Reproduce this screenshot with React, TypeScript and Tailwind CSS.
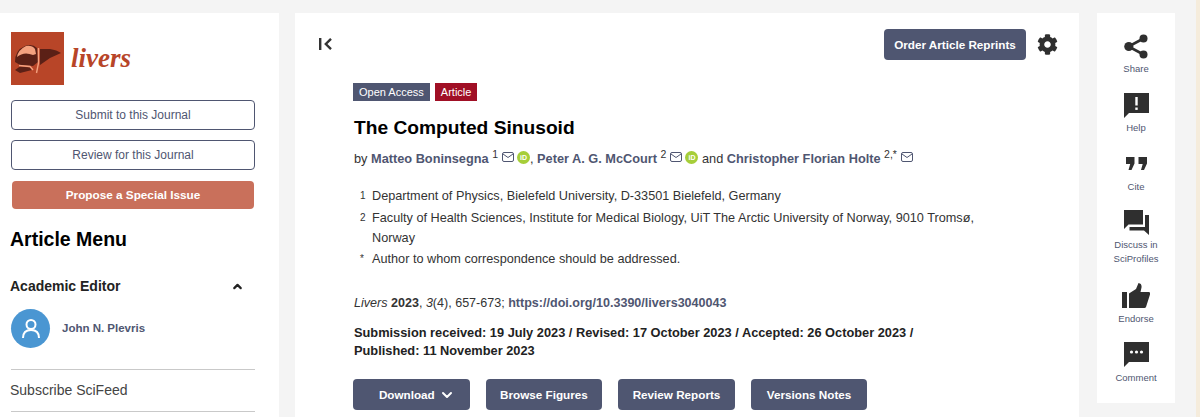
import { ChevronUp, ChevronDown } from "lucide-react"
import { FaCog } from "react-icons/fa"

function Mail() {
  return (
    <svg width="12" height="10" viewBox="0 0 12 10" fill="none" stroke="#4f5671" strokeWidth="1" className="inline-block ml-[4px] mr-[2px] align-[1px]">
      <rect x="0.5" y="0.5" width="11" height="9" rx="1.5" />
      <path d="M1 2l5 3.5L11 2" />
    </svg>
  )
}

function Orcid() {
  return (
    <span className="inline-flex w-[13px] h-[13px] rounded-full bg-[#a6ce39] text-white text-[7px] leading-[13px] justify-center font-bold align-[3px] ml-[1px]">
      iD
    </span>
  )
}

const ShareIcon = (
  <svg width="24" height="25" viewBox="0 0 24 25" fill="#2f2f2f" className="mt-[5px]">
    <path d="M19.5 4.5L4.5 12.5l15 8" fill="none" stroke="#2f2f2f" strokeWidth="2.6" />
    <circle cx="19.5" cy="4.5" r="4" />
    <circle cx="4.8" cy="12.5" r="4.6" />
    <circle cx="19.5" cy="20.5" r="4" />
  </svg>
)

const HelpIcon = (
  <svg width="25" height="25" viewBox="0 0 25 25" fill="#2f2f2f" className="mt-[4px]">
    <path d="M0 0H25V20H5L0 25Z" />
    <rect x="11.3" y="4" width="2.4" height="8.5" fill="#fff" />
    <rect x="11.3" y="14.5" width="2.4" height="2.4" fill="#fff" />
  </svg>
)

const CiteIcon = (
  <svg width="21" height="13" viewBox="0 0 21 13" fill="#2f2f2f" className="mt-[3px]">
    <path d="M0 0H8.5V6.5L5.5 13H2.5L4.2 7H0Z" />
    <path d="M12.5 0H21V6.5L18 13H15L16.7 7H12.5Z" />
  </svg>
)

const DiscussIcon = (
  <svg width="25" height="25" viewBox="0 0 25 25" fill="#2f2f2f" className="mt-[2px]">
    <path d="M0 0H19V14.5H4.5L0 19Z" />
    <path d="M21 5H25V25L20 20.5H5.5V17H21Z" />
  </svg>
)

const ThumbIcon = (
  <svg width="28" height="25" viewBox="0 0 28 25" fill="#2f2f2f" className="mt-[2px]">
    <rect x="0" y="9" width="5" height="16" />
    <path d="M7 10.5L14 6L16.5 0Q20 0.5 19.5 4.5L18.5 9H27Q28.5 9.5 28 11.5L24 24Q23.5 25 22.5 25H7Z" />
  </svg>
)

const CommentIcon = (
  <svg width="25" height="25" viewBox="0 0 25 25" fill="#2f2f2f" className="mt-[3px]">
    <path d="M0 0H25V20H5L0 25Z" />
    <circle cx="7.5" cy="10" r="1.6" fill="#fff" />
    <circle cx="12.5" cy="10" r="1.6" fill="#fff" />
    <circle cx="17.5" cy="10" r="1.6" fill="#fff" />
  </svg>
)

function SideAction({ icon, label, h }: { icon: React.ReactNode; label: React.ReactNode; h: string }) {
  return (
    <div className={`flex flex-col items-center ${h}`}>
      <div className="h-[32px] flex items-center justify-center">{icon}</div>
      <div className="text-[9.5px] leading-[15px] mt-[1px] text-[#4f5671] text-center">{label}</div>
    </div>
  )
}

function ActionButton({ children }: { children: React.ReactNode }) {
  return (
    <button className="w-[116.6px] h-[31px] rounded bg-[#4f5671] text-white text-[11.7px] font-bold flex items-center justify-center">
      {children}
    </button>
  )
}

export default function App() {
  return (
    <div className="h-[417px] w-[1200px] overflow-hidden bg-[#f4f4f4] flex pt-[13px] font-['Liberation_Sans',Arial,sans-serif] relative">
      <aside className="w-[279px] h-[420px] bg-white px-[11px] pt-[19px] shrink-0">
        <div className="flex items-center h-[53px]">
          <div className="w-[53px] h-[53px] bg-[#b84528]">
            <svg width="53" height="53" viewBox="0 0 53 53">
              <path d="M4 30Q4 18 14 14Q21 11 26 16L27 30L22 34L9 33Z" fill="#5b2016" />
              <path d="M6 25Q7 18 15 14Q21 13 24 17L25 22L22 23Q13 19 6 25Z" fill="#f4a17f" />
              <path d="M29 17L39 17Q46 18 50 21L39 26L29 33Z" fill="#5b2016" />
              <path d="M4 38L9 34.5L19 35.5L21 38L9 41Z" fill="#5b2016" />
              <path d="M27.5 16V31L25.5 41M8 33.5L19 34.5L22 38" fill="none" stroke="#f4a17f" strokeWidth="1.4" />
            </svg>
          </div>
          <span className="ml-[7px] font-['Liberation_Serif',serif] italic font-bold text-[27px] text-[#b84528] leading-none">livers</span>
        </div>
        <div className="mt-[15px] w-[244px] h-[30px] border border-[#4f5671] rounded text-[12px] text-[#4f5671] flex items-center justify-center">Submit to this Journal</div>
        <div className="mt-[10px] w-[244px] h-[30px] border border-[#4f5671] rounded text-[12px] text-[#4f5671] flex items-center justify-center">Review for this Journal</div>
        <div className="mt-[11px] ml-[1px] w-[242px] h-[28px] rounded bg-[#c9705b] text-[11.75px] font-bold text-white flex items-center justify-center">Propose a Special Issue</div>
        <h2 className="mt-[18px] -ml-[1px] text-[19.5px] leading-[24px] font-bold text-black">Article Menu</h2>
        <div className="mt-[26px] -ml-[1px] w-[245px] flex items-center justify-between pr-[11px]">
          <span className="text-[14px] leading-[18px] font-bold text-[#222]">Academic Editor</span>
          <ChevronUp size={13} strokeWidth={4} className="text-[#222] mt-[1px]" />
        </div>
        <div className="mt-[14px] flex items-center">
          <div className="w-[39px] h-[39px] rounded-full bg-[#4a96d2] flex items-center justify-center">
            <svg width="20" height="21" viewBox="0 0 20 21" fill="none" stroke="white" strokeWidth="2">
              <circle cx="10" cy="6.5" r="4.5" />
              <path d="M2 20c0-5 3-8 8-8s8 3 8 8" />
            </svg>
          </div>
          <span className="ml-[12px] mt-[1px] text-[11.5px] font-bold text-[#4f5671]">John N. Plevris</span>
        </div>
        <div className="mt-[21px] w-[244px] border-t border-[#c9c9c9] h-[42px] flex items-center text-[14px] text-[#444] -indent-[1px]">Subscribe SciFeed</div>
        <div className="w-[244px] border-t border-[#c9c9c9]" />
      </aside>

      <main className="ml-[16px] w-[784px] h-[420px] bg-white shrink-0">
        <div className="flex items-start justify-between pt-[16px] pl-[24px] pr-[21px] h-[70px]">
          <svg width="13" height="12" viewBox="0 0 13 12" className="mt-[9px]" fill="none" stroke="#333" strokeWidth="2.4">
            <path d="M1.2 0v12M12 0.8L6.8 6l5.2 5.2" />
          </svg>
          <div className="flex items-center">
            <button className="w-[142px] h-[31px] rounded bg-[#4f5671] text-white text-[11.7px] font-bold">Order Article Reprints</button>
            <FaCog size={21} className="ml-[11px] text-[#2f2f2f]" />
          </div>
        </div>
        <div className="pl-[58px]">
          <div className="flex gap-[5px] text-[11px] text-white leading-[18px]">
            <span className="bg-[#4f5671] px-[6px]">Open Access</span>
            <span className="bg-[#a00f25] px-[6px]">Article</span>
          </div>
          <h1 className="mt-[14px] ml-[1px] text-[19.2px] leading-[25px] font-bold text-black">The Computed Sinusoid</h1>
          <p className="mt-[10px] ml-[1px] text-[12.75px] leading-[18px] text-[#333] whitespace-nowrap">
            by <b className="text-[#4f5671]">Matteo Boninsegna</b> <sup className="text-[10.5px]">1</sup><Mail /><Orcid />,{" "}
            <b className="text-[#4f5671]">Peter A. G. McCourt</b> <sup className="text-[10.5px]">2</sup><Mail /><Orcid /> and{" "}
            <b className="text-[#4f5671]">Christopher Florian Holte</b> <sup className="text-[10.5px]">2,*</sup><Mail />
          </p>
          <div className="mt-[18px] ml-[1px] text-[12.7px] leading-[20px] text-[#333] w-[650px]">
            <div className="flex"><span className="w-[18px] text-[10px] pl-[6px]">1</span><span>Department of Physics, Bielefeld University, D-33501 Bielefeld, Germany</span></div>
            <div className="flex mt-[2px]"><span className="w-[18px] text-[10px] pl-[6px] shrink-0">2</span><span>Faculty of Health Sciences, Institute for Medical Biology, UiT The Arctic University of Norway, 9010 Tromsø, Norway</span></div>
            <div className="flex mt-[1px]"><span className="w-[18px] text-[10px] pl-[6px]">*</span><span>Author to whom correspondence should be addressed.</span></div>
          </div>
          <p className="mt-[25px] ml-[1px] text-[12.55px] leading-[18px] text-[#333]">
            <i>Livers</i> <b>2023</b>, <i>3</i>(4), 657-673; <b className="text-[#4f5671]">https://doi.org/10.3390/livers3040043</b>
          </p>
          <p className="mt-[12px] ml-[1px] text-[12.8px] leading-[18px] font-bold text-[#222] w-[580px]">
            Submission received: 19 July 2023 / Revised: 17 October 2023 / Accepted: 26 October 2023 / Published: 11 November 2023
          </p>
          <div className="mt-[19px] flex gap-[16px]">
            <ActionButton>
              <span className="ml-[11px]">Download</span>
              <ChevronDown size={16} strokeWidth={3} className="ml-[4px]" />
            </ActionButton>
            <ActionButton>Browse Figures</ActionButton>
            <ActionButton>Review Reports</ActionButton>
            <ActionButton>Versions Notes</ActionButton>
          </div>
        </div>
      </main>

      <aside className="ml-[18px] w-[78px] h-[390px] bg-white shrink-0 pt-[15px]">
        <SideAction h="h-[59px]" icon={ShareIcon} label="Share" />
        <SideAction h="h-[59px]" icon={HelpIcon} label="Help" />
        <SideAction h="h-[59px]" icon={CiteIcon} label="Cite" />
        <SideAction h="h-[73px]" icon={DiscussIcon} label={<span className="block leading-[14px]">Discuss in<br />SciProfiles</span>} />
        <SideAction h="h-[59px]" icon={ThumbIcon} label="Endorse" />
        <SideAction h="h-[50px]" icon={CommentIcon} label="Comment" />
      </aside>

      <div className="absolute right-0 top-0 bottom-0 w-[4px] bg-[#f5ecdc]" />
    </div>
  )
}
